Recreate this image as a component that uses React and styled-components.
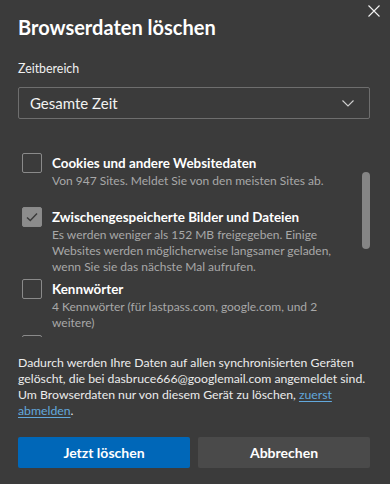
import React from 'react'
import styled, { createGlobalStyle } from 'styled-components'

const GlobalStyle = createGlobalStyle`
  html, body {
    margin: 0;
    padding: 0;
    background: #3b3b3b;
  }
  body {
    font-family: Lato, "Noto Sans", sans-serif;
    color: #ffffff;
  }
`

// the last row is scrolled almost out of view, only its box edge shows
const items = [
  {
    title: 'Cookies und andere Websitedaten',
    desc: ['Von 947 Sites. Meldet Sie von den meisten Sites ab.'],
    checked: false,
  },
  {
    title: 'Zwischengespeicherte Bilder und Dateien',
    desc: [
      'Es werden weniger als 152 MB freigegeben. Einige',
      'Websites werden möglicherweise langsamer geladen,',
      'wenn Sie sie das nächste Mal aufrufen.',
    ],
    checked: true,
  },
  {
    title: 'Kennwörter',
    desc: ['4 Kennwörter (für lastpass.com, google.com, und 2', 'weitere)'],
    checked: false,
  },
  {
    title: '',
    desc: [],
    checked: false,
  },
]

export default function App() {
  return (
    <>
      <GlobalStyle />
      <Dialog>
        <Header>
          <Title>Browserdaten löschen</Title>
          <CloseButton aria-label="Schließen">
            <svg width="12" height="12" viewBox="0 0 12 12">
              <path d="M0.5 0.5 L11.5 11.5 M11.5 0.5 L0.5 11.5" stroke="#f2f2f2" strokeWidth="1.1" fill="none" />
            </svg>
          </CloseButton>
        </Header>

        <Label>Zeitbereich</Label>
        <Select>
          <span>Gesamte Zeit</span>
          <svg width="12" height="7" viewBox="0 0 12 7">
            <path d="M0.5 0.5 L6 6 L11.5 0.5" stroke="#d0d0d0" strokeWidth="1.1" fill="none" />
          </svg>
        </Select>

        <List>
          {items.map((it, i) => (
            <Row key={i}>
              <Checkbox $checked={it.checked}>
                {it.checked && (
                  <svg width="14" height="14" viewBox="0 0 14 14">
                    <path d="M2 7.5 L5.3 10.6 L12 3.6" stroke="#3a3a3a" strokeWidth="1.4" fill="none" />
                  </svg>
                )}
              </Checkbox>
              {it.title && (
                <RowText>
                  <RowTitle>{it.title}</RowTitle>
                  {it.desc.map((line) => (
                    <RowDesc key={line}>{line}</RowDesc>
                  ))}
                </RowText>
              )}
            </Row>
          ))}
          <Thumb />
        </List>

        <Note>
          Dadurch werden Ihre Daten auf allen synchronisierten Geräten<br />
          gelöscht, die bei dasbruce666@googlemail.com angemeldet sind.<br />
          Um Browserdaten nur von diesem Gerät zu löschen, <Link href="#">zuerst<br />abmelden</Link>.
        </Note>

        <Buttons>
          <Button $primary>Jetzt löschen</Button>
          <Button>Abbrechen</Button>
        </Buttons>
      </Dialog>
    </>
  )
}

const Dialog = styled.div`
  width: 390px;
  height: 484px;
  box-sizing: border-box;
  padding: 0 20px 0 18px;
  display: flex;
  flex-direction: column;
  background: #3b3b3b;
`

const Header = styled.div`
  display: flex;
  justify-content: space-between;
  align-items: flex-start;
  padding-top: 5px;
`

const Title = styled.h1`
  margin: 8px 0 0;
  font-size: 20px;
  line-height: 28px;
  font-weight: 700;
  color: #ffffff;
`

const CloseButton = styled.button`
  margin-right: -10px;
  padding: 0;
  border: none;
  background: none;
  width: 12px;
  height: 12px;
  display: flex;
  cursor: pointer;
`

const Label = styled.div`
  margin-top: 19px;
  font-size: 12.4px;
  line-height: 18px;
  color: #f0f0f0;
`

const Select = styled.div`
  margin-top: 9px;
  height: 32px;
  box-sizing: border-box;
  border: 1px solid #6e6e6e;
  border-radius: 2px;
  padding: 0 15px 0 11px;
  display: flex;
  align-items: center;
  justify-content: space-between;
  font-size: 15px;
  line-height: 20px;
  color: #f2f2f2;
`

const List = styled.div`
  position: relative;
  margin-top: 34px;
  height: 184px;
  overflow: hidden;
  padding-left: 4px;
`

const Row = styled.div`
  display: flex;
  gap: 10px;
  min-height: 54px;
  padding-bottom: 4px;
  box-sizing: border-box;
`

const Checkbox = styled.div`
  flex-shrink: 0;
  width: 20px;
  height: 20px;
  box-sizing: border-box;
  border-radius: 2px;
  border: 1px solid #8a8a8a;
  background: ${({ $checked }) => ($checked ? '#8c8c8c' : 'transparent')};
  display: flex;
  align-items: center;
  justify-content: center;
`

const RowText = styled.div`
  display: flex;
  flex-direction: column;
`

const RowTitle = styled.div`
  font-size: 13.4px;
  line-height: 20px;
  font-weight: 700;
  color: #ffffff;
  white-space: nowrap;
`

const RowDesc = styled.div`
  font-size: 12px;
  line-height: 16px;
  color: #a8a8a8;
  white-space: nowrap;
`

const Thumb = styled.div`
  position: absolute;
  right: 0;
  top: 19px;
  width: 8px;
  height: 77px;
  border-radius: 4px;
  background: #858585;
`

const Note = styled.p`
  margin: 18px 0 0;
  font-size: 12.25px;
  line-height: 16px;
  color: #ececec;
  white-space: nowrap;
`

const Link = styled.a`
  color: #62a8dc;
  text-decoration: underline;
  text-underline-offset: 2px;
`

const Buttons = styled.div`
  margin-top: 18px;
  display: grid;
  grid-template-columns: 1fr 1fr;
  gap: 8px;
`

const Button = styled.button`
  height: 31px;
  border: none;
  border-radius: 2px;
  font-family: inherit;
  font-size: 14px;
  font-weight: 700;
  color: #ffffff;
  background: ${({ $primary }) => ($primary ? '#0067b8' : '#4a4a4a')};
  cursor: pointer;
`
